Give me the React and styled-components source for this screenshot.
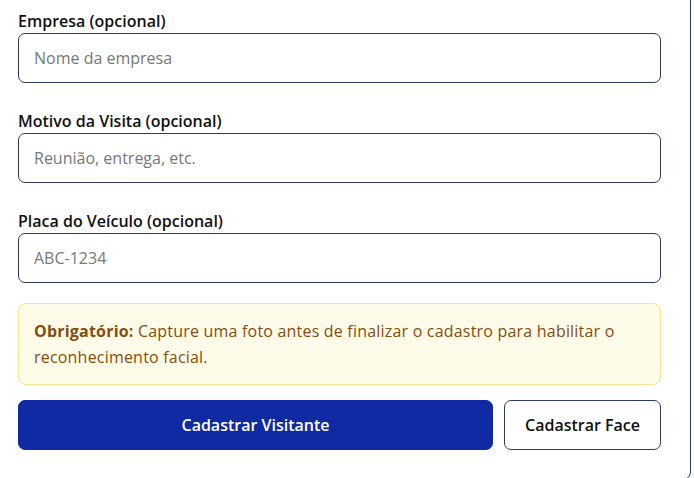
import React from "react";
import styled, { createGlobalStyle } from "styled-components";

const GlobalStyle = createGlobalStyle`
  html, body {
    margin: 0;
    padding: 0;
    background: #ffffff;
    overflow: hidden;
  }
  body {
    font-family: "Open Sans", "Noto Sans", sans-serif;
    color: #111111;
  }
  * {
    box-sizing: border-box;
  }
`;

// the card is scrolled: its top and left edge sit outside the window
const Card = styled.div`
  width: 703px;
  margin-left: -12px;
  margin-top: -30px;
  padding: 38px 29px 29px 29px;
  border: 1px solid #2c3a63;
  border-radius: 8px;
  background: #ffffff;
`;

const Field = styled.div`
  display: flex;
  flex-direction: column;
  margin-bottom: 26px;
`;

const Label = styled.label`
  font-size: 16px;
  font-weight: 600;
  line-height: 24px;
  color: #111111;
`;

const Input = styled.input`
  height: 50px;
  width: 100%;
  padding: 0 15px;
  border: 1px solid #2c3a63;
  border-radius: 7px;
  font-family: inherit;
  font-size: 16px;
  color: #111111;
  background: #ffffff;
  outline: none;

  &::placeholder {
    color: #777777;
  }
`;

const Notice = styled.div`
  margin-top: -6px;
  padding: 14px 15px 14px;
  background: #fefbe8;
  border: 1px solid #fbe58c;
  border-radius: 8px;
  font-size: 16px;
  line-height: 26px;
  letter-spacing: 0.2px;
  color: #854d0e;

  strong {
    font-weight: 700;
  }
`;

const Actions = styled.div`
  display: flex;
  gap: 11px;
  margin-top: 15px;
`;

const Button = styled.button`
  height: 50px;
  border-radius: 7px;
  font-family: inherit;
  font-size: 16px;
  font-weight: 600;
  cursor: pointer;
  flex: ${(p) => (p.$primary ? 1 : "none")};
  padding: 0 20px;
  background: ${(p) => (p.$primary ? "#0f2aa2" : "#ffffff")};
  color: ${(p) => (p.$primary ? "#ffffff" : "#111111")};
  border: 1px solid ${(p) => (p.$primary ? "#0f2aa2" : "#2c3a63")};
`;

const fields = [
  { label: "Empresa (opcional)", placeholder: "Nome da empresa" },
  { label: "Motivo da Visita (opcional)", placeholder: "Reunião, entrega, etc." },
  { label: "Placa do Veículo (opcional)", placeholder: "ABC-1234" },
];

export default function App() {
  return (
    <>
      <GlobalStyle />
      <Card>
        {fields.map((f) => (
          <Field key={f.label}>
            <Label>{f.label}</Label>
            <Input placeholder={f.placeholder} />
          </Field>
        ))}
        <Notice>
          <strong>Obrigatório:</strong> Capture uma foto antes de finalizar o
          cadastro para habilitar o reconhecimento facial.
        </Notice>
        <Actions>
          <Button $primary>Cadastrar Visitante</Button>
          <Button>Cadastrar Face</Button>
        </Actions>
      </Card>
    </>
  );
}
